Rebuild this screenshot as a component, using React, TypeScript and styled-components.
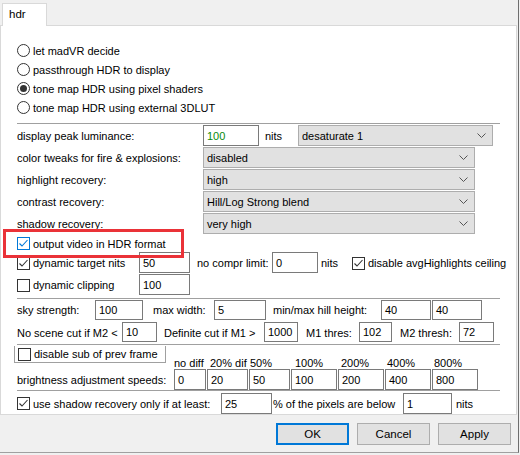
import React from 'react';
import styled, { createGlobalStyle } from 'styled-components';

const GlobalStyle = createGlobalStyle`
  html, body {
    margin: 0;
    padding: 0;
    background: #f0f0f0;
  }
  body {
    font-family: "Liberation Sans", Arial, sans-serif;
    font-size: 11px;
    color: #000;
  }
`;

const Window = styled.div`
  width: 519px;
  height: 453px;
  box-sizing: border-box;
  border-right: 1px solid #6e6e6e;
  border-bottom: 1px solid #a0a0a0;
  overflow: hidden;
  display: flex;
  flex-direction: column;
`;

const TabStrip = styled.div`
  height: 25px;
  padding: 3px 0 0 2px;
  box-sizing: border-box;
  display: flex;
  align-items: flex-end;
`;

const Tab = styled.div`
  width: 45px;
  height: 23px;
  box-sizing: border-box;
  background: #fff;
  border: 1px solid #d9d9d9;
  border-bottom: none;
  padding: 4px 0 0 6px;
  font-size: 11.5px;
  position: relative;
  z-index: 1;
  margin-bottom: -1px;
`;

const Panel = styled.div`
  position: relative;
  width: 517px;
  height: 390px;
  box-sizing: border-box;
  background: #fff;
  border: 1px solid #d9d9d9;
  padding-left: 16px;
  display: flex;
  flex-direction: column;
`;

const RadioGroup = styled.div`
  margin-top: 15px;
  display: flex;
  flex-direction: column;
`;

const RadioRow = styled.label`
  height: 19px;
  display: flex;
  align-items: center;
  gap: 3px;
`;

const Radio = styled.span<{ $on?: boolean }>`
  width: 13px;
  height: 13px;
  box-sizing: border-box;
  border: 1px solid #333;
  border-radius: 50%;
  display: flex;
  align-items: center;
  justify-content: center;
  &::after {
    content: '';
    width: 7px;
    height: 7px;
    border-radius: 50%;
    background: ${p => (p.$on ? '#333' : 'transparent')};
  }
`;

const Separator = styled.div<{ $top: number }>`
  margin-top: ${p => p.$top}px;
  width: 483px;
  height: 1px;
  background: #a0a0a0;
`;

const Row = styled.div<{ $h: number; $top?: number }>`
  height: ${p => p.$h}px;
  margin-top: ${p => p.$top ?? 0}px;
  display: flex;
  align-items: center;
`;

const FormRow = styled(Row)`
  align-items: flex-start;
`;

const Label = styled.span<{ $w?: number; $ml?: number }>`
  flex: none;
  width: ${p => (p.$w ? `${p.$w}px` : 'auto')};
  margin-left: ${p => p.$ml ?? 0}px;
  white-space: nowrap;
  align-self: center;
`;

const Edit = styled.div<{ $w: number; $h?: number; $ml?: number; $green?: boolean }>`
  flex: none;
  width: ${p => p.$w}px;
  height: ${p => p.$h ?? 21}px;
  margin-left: ${p => p.$ml ?? 0}px;
  box-sizing: border-box;
  border: 1px solid #7a7a7a;
  background: #fff;
  padding-left: 3px;
  display: flex;
  align-items: center;
  color: ${p => (p.$green ? '#0a8a0a' : '#000')};
`;

const Combo = styled.div<{ $w: number }>`
  flex: none;
  width: ${p => p.$w}px;
  height: 21px;
  box-sizing: border-box;
  border: 1px solid #adadad;
  background: #e1e1e1;
  padding: 0 6px 0 3px;
  display: flex;
  align-items: center;
  justify-content: space-between;
`;

const Chevron = () => (
  <svg width="9" height="5" viewBox="0 0 9 5">
    <path d="M0.5 0.5 L4.5 4.5 L8.5 0.5" fill="none" stroke="#555" strokeWidth="1" />
  </svg>
);

const CheckItem = styled.label<{ $w?: number; $ml?: number }>`
  flex: none;
  width: ${p => (p.$w ? `${p.$w}px` : 'auto')};
  margin-left: ${p => p.$ml ?? 0}px;
  display: flex;
  align-items: center;
  gap: 3px;
  white-space: nowrap;
  align-self: center;
`;

const Box = styled.span<{ $focus?: boolean }>`
  flex: none;
  width: 13px;
  height: 13px;
  box-sizing: border-box;
  border: 1px solid ${p => (p.$focus ? '#0078d7' : '#333')};
  background: #fff;
  display: flex;
  align-items: center;
  justify-content: center;
`;

const Check = ({ on, focus }: { on?: boolean; focus?: boolean }) => (
  <Box $focus={focus}>
    {on && (
      <svg width="11" height="11" viewBox="0 0 11 11">
        <path d="M1.5 5.5 L4 8 L9.5 2" fill="none" stroke={focus ? '#0078d7' : '#333'} strokeWidth="1.1" />
      </svg>
    )}
  </Box>
);

const Highlight = styled.div`
  position: absolute;
  left: 2px;
  top: 203px;
  width: 181px;
  height: 29px;
  box-sizing: border-box;
  border: 3px solid #ea3238;
  pointer-events: none;
`;

const SpeedBlock = styled.div`
  margin-top: 1px;
  height: 44px;
  display: flex;
`;

const SpeedLeft = styled.div`
  width: 157px;
  flex: none;
  display: flex;
  flex-direction: column;
`;

const SubFrame = styled.div`
  height: 17px;
  width: 152px;
  margin-left: -3px;
  padding-left: 3px;
  box-sizing: border-box;
  border: 1px solid #a0a0a0;
  border-top: none;
  display: flex;
  align-items: center;
`;

const SpeedLabel = styled.div`
  height: 21px;
  margin-top: 6px;
  display: flex;
  align-items: center;
`;

const SpeedCols = styled.div`
  display: flex;
  gap: 1px;
  padding-top: 11px;
`;

const SpeedCol = styled.div`
  display: flex;
  flex-direction: column;
`;

const SpeedHead = styled.div<{ $pad: number }>`
  height: 12px;
  line-height: 12px;
  padding-left: ${p => p.$pad}px;
  white-space: nowrap;
`;

const ButtonBar = styled.div`
  display: flex;
  justify-content: flex-end;
  gap: 8px;
  padding: 8px 7px 0 0;
`;

const Button = styled.button<{ $default?: boolean }>`
  width: 73px;
  height: 22px;
  box-sizing: border-box;
  background: #e1e1e1;
  border: ${p => (p.$default ? '2px solid #0078d7' : '1px solid #adadad')};
  font-family: inherit;
  font-size: 11.5px;
  color: #000;
  padding: 0;
`;

const speeds = [
  { head: 'no diff', pad: 0, w: 32, v: '0' },
  { head: '20% dif', pad: 3, w: 41, v: '20' },
  { head: '50%', pad: 1, w: 41, v: '50' },
  { head: '100%', pad: 4, w: 46, v: '100' },
  { head: '200%', pad: 3, w: 46, v: '200' },
  { head: '400%', pad: 2, w: 46, v: '400' },
  { head: '800%', pad: 2, w: 46, v: '800' },
];

const combos = [
  { label: 'color tweaks for fire & explosions:', value: 'disabled' },
  { label: 'highlight recovery:', value: 'high' },
  { label: 'contrast recovery:', value: 'Hill/Log Strong blend' },
  { label: 'shadow recovery:', value: 'very high' },
];

const App: React.FC = () => {
  return (
    <Window>
      <GlobalStyle />
      <TabStrip>
        <Tab>hdr</Tab>
      </TabStrip>
      <Panel>
        <RadioGroup>
          <RadioRow><Radio />let madVR decide</RadioRow>
          <RadioRow><Radio />passthrough HDR to display</RadioRow>
          <RadioRow><Radio $on />tone map HDR using pixel shaders</RadioRow>
          <RadioRow><Radio />tone map HDR using external 3DLUT</RadioRow>
        </RadioGroup>

        <Separator $top={6} />

        <FormRow $h={22} $top={1}>
          <Label $w={186}>display peak luminance:</Label>
          <Edit $w={56} $green>100</Edit>
          <Label $w={33} $ml={6}>nits</Label>
          <Combo $w={195}>desaturate 1<Chevron /></Combo>
        </FormRow>
        {combos.map(c => (
          <FormRow $h={22} key={c.label}>
            <Label $w={186}>{c.label}</Label>
            <Combo $w={272}>{c.value}<Chevron /></Combo>
          </FormRow>
        ))}

        <Row $h={17}>
          <CheckItem><Check on focus />output video in HDR format</CheckItem>
        </Row>
        <FormRow $h={22}>
          <CheckItem $w={122}><Check on />dynamic target nits</CheckItem>
          <Edit $w={51}>50</Edit>
          <Label $w={75} $ml={7}>no compr limit:</Label>
          <Edit $w={46}>0</Edit>
          <Label $w={31} $ml={3}>nits</Label>
          <CheckItem><Check on />disable avgHighlights ceiling</CheckItem>
        </FormRow>
        <FormRow $h={22}>
          <CheckItem $w={122}><Check />dynamic clipping</CheckItem>
          <Edit $w={51}>100</Edit>
        </FormRow>

        <Separator $top={2} />

        <FormRow $h={20} $top={1}>
          <Label $w={78}>sky strength:</Label>
          <Edit $w={48} $h={20}>100</Edit>
          <Label $w={61} $ml={10}>max width:</Label>
          <Edit $w={52} $h={20}>5</Edit>
          <Label $w={108} $ml={7}>min/max hill height:</Label>
          <Edit $w={50} $h={20}>40</Edit>
          <Edit $w={50} $h={20} $ml={1}>40</Edit>
        </FormRow>
        <FormRow $h={21} $top={2}>
          <Label $w={105}>No scene cut if M2 &lt;</Label>
          <Edit $w={35} $h={20}>10</Edit>
          <Label $w={100} $ml={7}>Definite cut if M1 &gt;</Label>
          <Edit $w={34} $h={20}>1000</Edit>
          <Label $w={53} $ml={8}>M1 thres:</Label>
          <Edit $w={33} $h={20}>102</Edit>
          <Label $w={59} $ml={8}>M2 thresh:</Label>
          <Edit $w={35} $h={20}>72</Edit>
        </FormRow>

        <Separator $top={1} />

        <SpeedBlock>
          <SpeedLeft>
            <SubFrame>
              <CheckItem><Check />disable sub of prev frame</CheckItem>
            </SubFrame>
            <SpeedLabel>brightness adjustment speeds:</SpeedLabel>
          </SpeedLeft>
          <SpeedCols>
            {speeds.map(s => (
              <SpeedCol key={s.head}>
                <SpeedHead $pad={s.pad}>{s.head}</SpeedHead>
                <Edit $w={s.w}>{s.v}</Edit>
              </SpeedCol>
            ))}
          </SpeedCols>
        </SpeedBlock>

        <Separator $top={0} />

        <FormRow $h={21} $top={2}>
          <CheckItem $w={204}><Check on />use shadow recovery only if at least:</CheckItem>
          <Edit $w={51}>25</Edit>
          <Label $w={130} $ml={1}>% of the pixels are below</Label>
          <Edit $w={49}>1</Edit>
          <Label $ml={4}>nits</Label>
        </FormRow>

        <Highlight />
      </Panel>
      <ButtonBar>
        <Button $default>OK</Button>
        <Button>Cancel</Button>
        <Button>Apply</Button>
      </ButtonBar>
    </Window>
  );
};

export default App;
